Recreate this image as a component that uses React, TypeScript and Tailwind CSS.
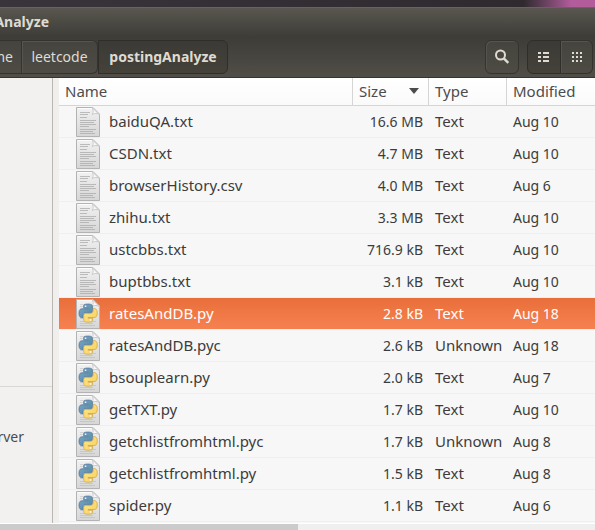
type FileKind = 'text' | 'python'

interface FileRow {
  name: string
  size: string
  type: string
  modified: string
  kind: FileKind
}

const files: FileRow[] = [
  { name: 'baiduQA.txt', size: '16.6 MB', type: 'Text', modified: 'Aug 10', kind: 'text' },
  { name: 'CSDN.txt', size: '4.7 MB', type: 'Text', modified: 'Aug 10', kind: 'text' },
  { name: 'browserHistory.csv', size: '4.0 MB', type: 'Text', modified: 'Aug 6', kind: 'text' },
  { name: 'zhihu.txt', size: '3.3 MB', type: 'Text', modified: 'Aug 10', kind: 'text' },
  { name: 'ustcbbs.txt', size: '716.9 kB', type: 'Text', modified: 'Aug 10', kind: 'text' },
  { name: 'buptbbs.txt', size: '3.1 kB', type: 'Text', modified: 'Aug 10', kind: 'text' },
  { name: 'ratesAndDB.py', size: '2.8 kB', type: 'Text', modified: 'Aug 18', kind: 'python' },
  { name: 'ratesAndDB.pyc', size: '2.6 kB', type: 'Unknown', modified: 'Aug 18', kind: 'python' },
  { name: 'bsouplearn.py', size: '2.0 kB', type: 'Text', modified: 'Aug 7', kind: 'python' },
  { name: 'getTXT.py', size: '1.7 kB', type: 'Text', modified: 'Aug 10', kind: 'python' },
  { name: 'getchlistfromhtml.pyc', size: '1.7 kB', type: 'Unknown', modified: 'Aug 8', kind: 'python' },
  { name: 'getchlistfromhtml.py', size: '1.5 kB', type: 'Text', modified: 'Aug 8', kind: 'python' },
  { name: 'spider.py', size: '1.1 kB', type: 'Text', modified: 'Aug 6', kind: 'python' },
  { name: '', size: '', type: '', modified: '', kind: 'python' },
]

const selected = 'ratesAndDB.py'

function PythonLogo() {
  return (
    <g transform="translate(3 5) scale(0.76)" strokeWidth="0.9">
      <path
        fill="url(#pyBlue)"
        stroke="#4a7595"
        d="M14.25.18l.9.2.73.26.59.3.45.32.34.34.25.34.16.33.1.3.04.26.02.2-.01.13V8.5l-.05.63-.13.55-.21.46-.26.38-.3.31-.33.25-.35.19-.35.14-.33.1-.3.07-.26.04-.21.02H8.77l-.69.05-.59.14-.5.22-.41.27-.33.32-.27.35-.2.36-.15.37-.1.35-.07.32-.04.27-.02.21v3.06H3.17l-.21-.03-.28-.07-.32-.12-.35-.18-.36-.26-.36-.36-.35-.46-.32-.59-.28-.73-.21-.88-.14-1.05-.05-1.23.06-1.22.16-1.04.24-.87.32-.71.36-.57.4-.44.42-.33.42-.24.4-.16.36-.1.32-.05.24-.01h.16l.06.01h8.16v-.83H6.18l-.01-2.75-.02-.37.05-.34.11-.31.17-.28.25-.26.31-.23.38-.2.44-.18.51-.15.58-.12.64-.1.71-.06.77-.04.84-.02 1.27.05z"
      />
      <path
        fill="url(#pyYellow)"
        stroke="#c9a03c"
        d="M21.04 6.11l.28.06.32.12.35.18.36.27.36.35.35.47.32.59.28.73.21.88.14 1.04.05 1.23-.06 1.23-.16 1.04-.24.86-.32.71-.36.57-.4.45-.42.33-.42.24-.4.16-.36.09-.32.05-.24.02-.16-.01h-8.22v.82h5.84l.01 2.76.02.36-.05.34-.11.31-.17.29-.25.25-.31.24-.38.2-.44.17-.51.15-.58.13-.64.09-.71.07-.77.04-.84.01-1.27-.04-1.07-.14-.9-.2-.73-.25-.59-.3-.45-.33-.34-.34-.25-.34-.16-.33-.1-.3-.04-.25-.02-.2.01-.13v-5.34l.05-.64.13-.54.21-.46.26-.38.3-.32.33-.24.35-.2.35-.14.33-.1.3-.06.26-.04.21-.02.13-.01h5.84l.69-.05.59-.14.5-.21.41-.28.33-.32.27-.35.2-.36.15-.36.1-.35.07-.32.04-.28.02-.21V6.07h2.09z"
      />
      <circle cx="8.6" cy="3" r="1.1" fill="#f4f8fb" />
      <circle cx="15.2" cy="21" r="1.1" fill="#fffbe6" />
    </g>
  )
}

function FileIcon({ kind }: { kind: FileKind }) {
  return (
    <svg width="24" height="30" viewBox="0 0 24 30" aria-hidden="true" className="block">
      <path d="M.5.5H17l6.5 6.5V29.5H.5z" fill="url(#paper)" stroke="#b3b3b3" />
      <path d="M1.5 1.5H16" stroke="#fff" strokeOpacity=".8" />
      <path
        d="M4 5.5h10M4 7.5h8M4 10.5h7M4 13.5h16M4 15.5h14M4 17.5h16M4 19.5h9M4 22.5h16M4 24.5h13M4 26.5h15"
        stroke="#a9a9a9"
        strokeOpacity={kind === 'python' ? '.4' : '.75'}
      />
      <path d="M16 .5c1.5 2 1.5 4 .3 7 2.5-1.5 5-1.5 7.2.3z" fill="#fafafa" stroke="#cacaca" />
      {kind === 'python' && <PythonLogo />}
    </svg>
  )
}

function Gradients() {
  return (
    <svg className="absolute size-0" aria-hidden="true">
      <defs>
        <linearGradient id="paper" x1="0" y1="0" x2="0" y2="1">
          <stop offset="0" stopColor="#f2f2f2" />
          <stop offset="1" stopColor="#d6d6d6" />
        </linearGradient>
        <linearGradient id="pyBlue" x1="0" y1="0" x2="1" y2="1">
          <stop offset="0" stopColor="#7fa9c6" />
          <stop offset="1" stopColor="#4f83a8" />
        </linearGradient>
        <linearGradient id="pyYellow" x1="0" y1="0" x2="1" y2="1">
          <stop offset="0" stopColor="#ffe992" />
          <stop offset="1" stopColor="#f6cd55" />
        </linearGradient>
      </defs>
    </svg>
  )
}

function ListIcon() {
  return (
    <svg width="12" height="10" viewBox="0 0 12 10" fill="#dfdbd2" aria-hidden="true">
      <path d="M0 0h3v2H0zM5 0h6v2H5zM0 4h3v2H0zM5 4h6v2H5zM0 8h3v2H0zM5 8h6v2H5z" />
    </svg>
  )
}

function GridIcon() {
  return (
    <svg width="10" height="10" viewBox="0 0 10 10" fill="#dfdbd2" aria-hidden="true">
      <path d="M0 0h2v2H0zM4 0h2v2H4zM8 0h2v2H8zM0 4h2v2H0zM4 4h2v2H4zM8 4h2v2H8zM0 8h2v2H0zM4 8h2v2H4zM8 8h2v2H8z" />
    </svg>
  )
}

function SearchIcon() {
  return (
    <svg width="16" height="16" viewBox="0 0 16 16" fill="none" stroke="#dfdbd2" aria-hidden="true">
      <circle cx="6.5" cy="6" r="4.5" strokeWidth="2" />
      <path d="M9.8 9.3l4.5 4.5" strokeWidth="2.4" />
    </svg>
  )
}

function Toolbar() {
  return (
    <div className="flex h-[42px] shrink-0 items-center justify-between border-b border-[#35342f] bg-linear-to-b from-[#3d3c37] to-[#504e47]">
      <nav className="flex h-[34px] text-[#dfdbd2]" aria-label="Path">
        <button className="flex w-[22px] items-center justify-end border-y border-r border-[#34332e] bg-linear-to-b from-[#45443e] to-[#4d4b44] pr-2">me</button>
        <button className="w-[76px] rounded-r-md border-y border-r border-[#34332e] bg-linear-to-b from-[#45443e] to-[#4d4b44] shadow-[inset_1px_1px_0_#56544d]">leetcode</button>
        <button className="w-[130px] rounded-r-md border border-[#2f2e2a] bg-linear-to-b from-[#3b3a36] to-[#444239] font-bold">postingAnalyze</button>
      </nav>
      <div className="flex h-[34px] gap-2">
        <button aria-label="Search" className="flex w-[34px] items-center justify-center rounded-md border border-[#34332e] bg-linear-to-b from-[#45443e] to-[#4d4b44] shadow-[inset_1px_1px_0_#56544d]">
          <SearchIcon />
        </button>
        <div className="flex">
          <button aria-label="List view" className="flex w-[34px] items-center justify-center rounded-l-md border border-[#2f2e2a] bg-linear-to-b from-[#3b3a36] to-[#444239]">
            <ListIcon />
          </button>
          <button aria-label="Grid view" className="mr-[2px] flex w-8 items-center justify-center rounded-r-md border-y border-r border-[#34332e] bg-linear-to-b from-[#45443e] to-[#4d4b44] shadow-[inset_1px_1px_0_#56544d]">
            <GridIcon />
          </button>
        </div>
      </div>
    </div>
  )
}

function FileTable() {
  const head = 'h-7 border-b border-[#d5d5d5] bg-linear-to-b from-white to-[#fafafa] px-0 pt-0 pb-[2px] text-left font-normal text-[#4c4c4c] text-[15px] leading-5'
  return (
    <table className="w-full table-fixed border-separate border-spacing-0 whitespace-nowrap">
      <thead>
        <tr>
          <th className={`${head} border-r`}><button className="block w-full pl-[6px] text-left">Name</button></th>
          <th className={`${head} w-[76px] border-r`}>
            <button className="flex w-full items-center justify-between pr-[9px] pl-[6px]">
              Size
              <svg width="10" height="6" viewBox="0 0 10 6" fill="#4c4c4c" aria-hidden="true"><path d="M0 0h10L5 6z" /></svg>
            </button>
          </th>
          <th className={`${head} w-[78px] border-r`}><button className="block w-full pl-[6px] text-left">Type</button></th>
          <th className={`${head} w-[88px]`}><button className="block w-full pl-[6px] text-left">Modified</button></th>
        </tr>
      </thead>
      <tbody>
        {files.map((f, i) => {
          const on = f.name === selected
          const cell = `h-8 border-b border-[#efefef] p-0 ${on ? 'text-white' : 'text-[#3c3c3c]'}`
          return (
            <tr key={i} aria-selected={on} className={on ? 'bg-linear-to-b from-[#e86f3b] to-[#f68150] bg-[length:100%_31px] bg-no-repeat' : 'bg-[#f7f7f7]'}>
              <td className={cell}>
                <div className="flex items-center gap-[9px] pl-[17px] text-[15px] leading-5">
                  <FileIcon kind={f.kind} />
                  <span className="pb-[2px]">{f.name}</span>
                </div>
              </td>
              <td className={cell}><div className="pr-[6px] text-right">{f.size}</div></td>
              <td className={cell}><div className="pb-[2px] pl-[6px] text-[15px] leading-5">{f.type}</div></td>
              <td className={cell}><div className="pl-[6px]">{f.modified}</div></td>
            </tr>
          )
        })}
      </tbody>
    </table>
  )
}

export default function App() {
  return (
    <div className="flex h-screen flex-col overflow-hidden bg-[#f2f1f0] font-['Noto_Sans',sans-serif] text-[14px] leading-5">
      <Gradients />
      <div className="h-[7px] shrink-0 bg-linear-to-r from-[#39343b] from-0% via-[#2f2a30] via-88% to-[#b25c9c] to-96%" />
      <header className="flex h-[29px] shrink-0 items-center overflow-hidden border-t border-[#66645b] bg-linear-to-b from-[#59574f] to-[#3e3d38] font-bold text-[#dfdbd2]">
        <h1 className="flex w-[49px] shrink-0 justify-end">Analyze</h1>
      </header>
      <Toolbar />
      <main className="flex min-h-0 flex-1 overflow-hidden">
        <aside className="flex w-[53px] shrink-0 flex-col border-r border-[#b9b6b1] bg-[#f2f1f0] text-[#4c4c4c]">
          <div className="h-[309px] shrink-0 border-b border-[#d9d7d4]" />
          <div className="flex h-[100px] w-6 items-center justify-end">rver</div>
        </aside>
        <div className="w-[6px] shrink-0 bg-[#f0efed]" />
        <section className="min-w-0 flex-1 overflow-hidden bg-[#f7f7f7]">
          <FileTable />
        </section>
      </main>
      <div className="h-[7px] shrink-0 border-t border-white bg-[#efefef]">
        <div className="h-full w-1/2 bg-[#cbcbcb]" />
      </div>
    </div>
  )
}
